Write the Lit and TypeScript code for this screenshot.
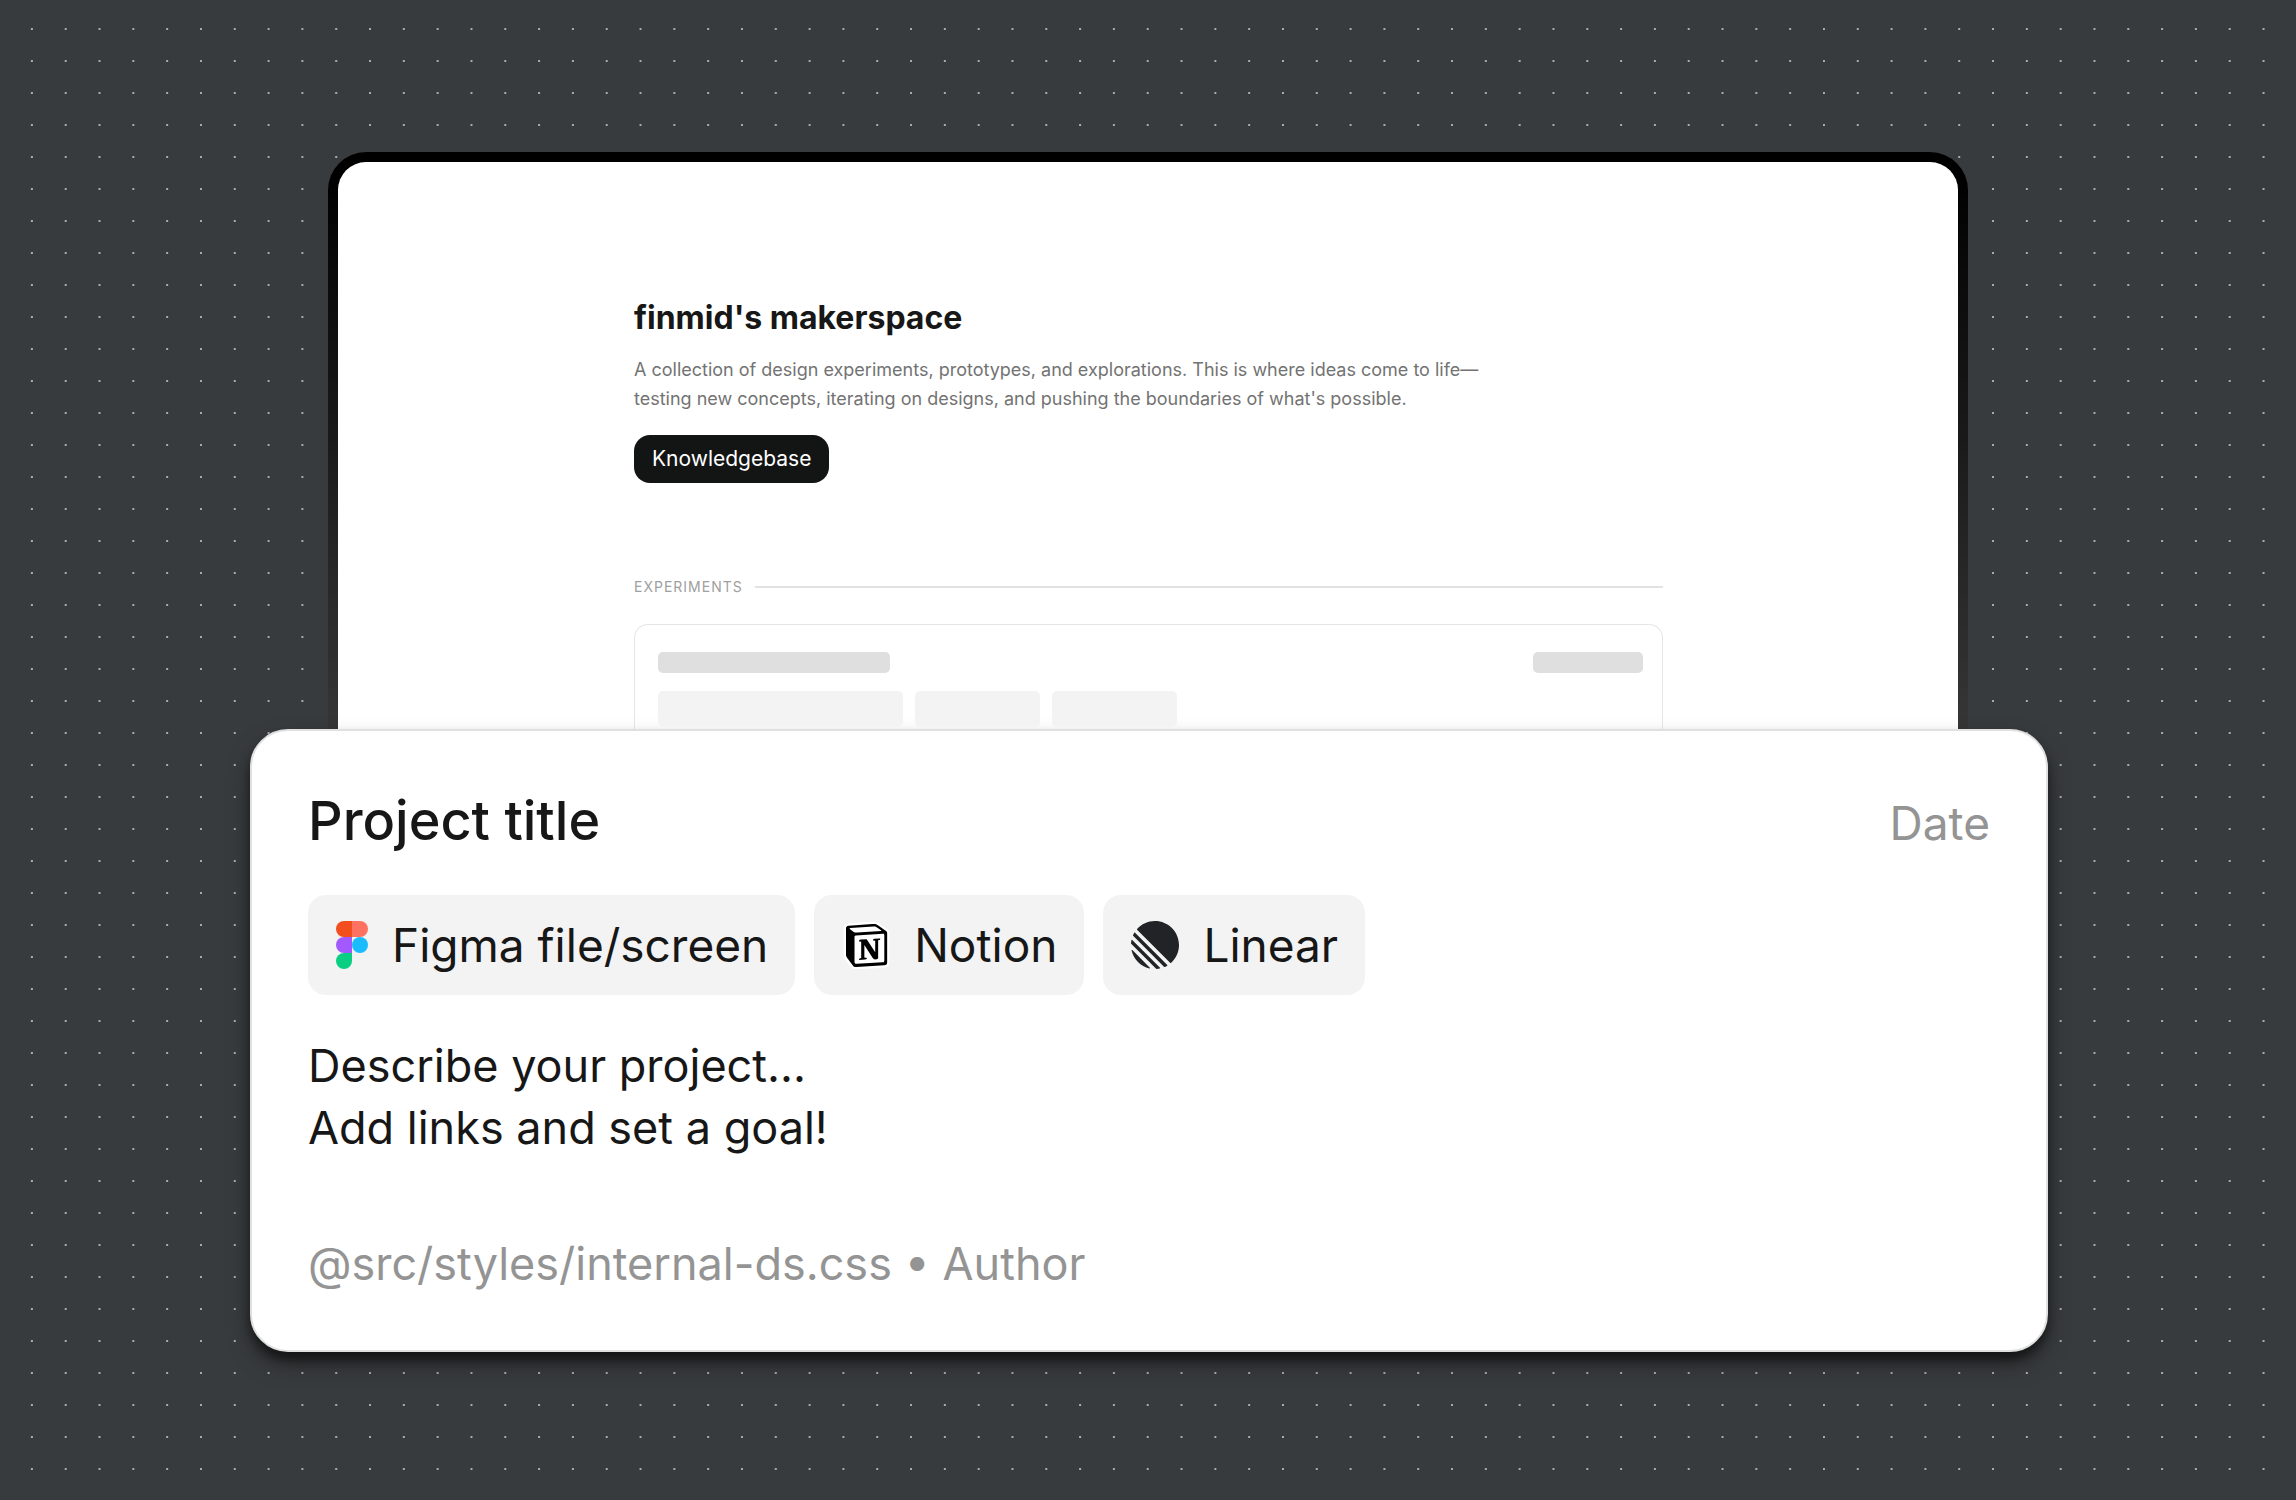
import { LitElement, html, css, svg } from "lit";
import { customElement } from "lit/decorators.js";

const figmaLogo = svg`
  <svg class="logo logo-figma" viewBox="0 0 32 48" aria-hidden="true">
    <path fill="#f24e1e" d="M8 0h8v16H8A8 8 0 0 1 8 0z" />
    <path fill="#ff7262" d="M16 0h8a8 8 0 0 1 0 16h-8z" />
    <path fill="#a259ff" d="M8 16h8v16H8a8 8 0 0 1 0-16z" />
    <circle fill="#1abcfe" cx="24" cy="24" r="8" />
    <path fill="#0acf83" d="M8 32h8v8a8 8 0 1 1-8-8z" />
  </svg>`;

const notionLogo = svg`
  <svg class="logo logo-square" viewBox="0 0 48 48" aria-hidden="true">
    <g transform="translate(4 3) scale(.43)">
      <path fill="#fff" stroke="#fff" stroke-width="11" stroke-linejoin="round" d="M6.017 4.313l55.333-4.087c6.797-.583 8.543-.19 12.817 2.917l17.663 12.443c2.913 2.14 3.883 2.723 3.883 5.053v68.243c0 4.277-1.553 6.807-6.99 7.193L24.467 99.967c-4.08.193-6.023-.39-8.16-3.113L3.3 79.94c-2.333-3.113-3.3-5.443-3.3-8.167V11.113c0-3.497 1.553-6.413 6.017-6.8z" />
      <path fill="#000" fill-rule="evenodd" d="M61.35.227l-55.333 4.087C1.553 4.7 0 7.617 0 11.113v60.66c0 2.723.967 5.053 3.3 8.167l13.007 16.913c2.137 2.723 4.08 3.307 8.16 3.113l64.257-3.89c5.433-.387 6.99-2.917 6.99-7.193V20.64c0-2.21-.873-2.847-3.443-4.733L74.167 3.143C69.893.036 68.147-.357 61.35.227zM25.92 19.523c-5.247.353-6.437.433-9.417-1.99L8.927 11.507c-.77-.78-.383-1.753 1.557-1.947l53.193-3.887c4.467-.39 6.793 1.167 8.54 2.527l9.123 6.61c.39.197 1.36 1.36.193 1.36L26.6 19.477zM19.803 88.3V30.367c0-2.53.777-3.697 3.103-3.893L86 22.78c2.14-.193 3.107 1.167 3.107 3.693v57.547c0 2.53-.39 4.67-3.883 4.863l-60.377 3.5c-3.493.193-5.043-.97-5.043-4.083zm59.6-54.827c.387 1.75 0 3.5-1.75 3.7l-2.91.577v42.773c-2.527 1.36-4.853 2.137-6.797 2.137-3.107 0-3.883-.973-6.21-3.887l-19.03-29.94v28.967l6.02 1.363s0 3.5-4.857 3.5l-13.39.777c-.39-.78 0-2.723 1.357-3.11l3.497-.97v-38.3L30.48 40.667c-.39-1.75.58-4.277 3.3-4.473l14.367-.967 19.8 30.327v-26.83l-5.047-.58c-.39-2.143 1.163-3.7 3.103-3.89z" />
    </g>
  </svg>`;

const linearLogo = svg`
  <svg class="logo logo-square" viewBox="0 0 100 100" aria-hidden="true">
    <path fill="#222326" d="M1.225 61.523c-.222-.949.908-1.546 1.597-.857l36.512 36.512c.689.689.092 1.819-.857 1.597C20.052 94.452 5.548 79.949 1.225 61.523zM.002 46.889c-.018.283.089.56.29.761l52.058 52.058c.201.201.477.308.761.29 2.369-.148 4.694-.46 6.962-.926.765-.157 1.03-1.096.478-1.648L2.576 39.449c-.552-.552-1.491-.286-1.648.478-.466 2.269-.778 4.593-.926 6.962zM4.211 29.705c-.166.374-.082.811.208 1.1l64.776 64.776c.289.289.726.374 1.1.208 1.786-.796 3.517-1.693 5.186-2.684.552-.328.637-1.087.183-1.541L8.436 24.337c-.454-.454-1.213-.369-1.541.183-.991 1.668-1.888 3.399-2.684 5.185zM12.659 18.074c-.37-.37-.393-.964-.044-1.354C21.78 6.459 35.111 0 49.952 0 77.593 0 100 22.407 100 50.048c0 14.841-6.459 28.172-16.72 37.338-.39.349-.984.326-1.354-.044z" />
  </svg>`;

const links = [
  { label: "Figma file/screen", logo: figmaLogo },
  { label: "Notion", logo: notionLogo },
  { label: "Linear", logo: linearLogo },
];

@customElement("makerspace-page")
class MakerspacePage extends LitElement {
  static styles = css`
    :host {
      display: block;
      padding: 10px 10px 0;
      border-radius: 38px 38px 0 0;
      background: linear-gradient(#000 0, #000 20px, #363636 100%);
    }
    .screen {
      padding: 132px 24px 0 25px;
      border-radius: 28px 28px 0 0;
      background: #fff;
    }
    .content {
      max-width: 1029px;
      margin: 0 auto;
    }
    h1 {
      margin: 0;
      font-size: 32px;
      line-height: 48px;
      font-weight: 700;
      color: #171717;
    }
    .intro {
      max-width: 860px;
      margin: 13px 0 22px;
      font-size: 18px;
      line-height: 29px;
      color: #737373;
    }
    .button {
      display: block;
      width: fit-content;
      padding: 0 18px;
      border-radius: 16px;
      font-size: 21px;
      line-height: 48px;
      color: #fff;
      background: #131514;
      text-decoration: none;
    }
    .section {
      display: flex;
      align-items: center;
      gap: 12px;
      margin: 92px 0 25px;
    }
    h2 {
      margin: 0;
      font-size: 14px;
      line-height: 24px;
      font-weight: 400;
      letter-spacing: 1px;
      color: #a0a0a0;
    }
    .rule {
      flex: 1;
      height: 2px;
      background: #e2e2e2;
    }
    .card {
      padding: 27px 19px 2px 23px;
      border: 1px solid #e6e6e6;
      border-bottom: 0;
      border-radius: 14px 14px 0 0;
    }
    .row {
      display: flex;
      justify-content: space-between;
      margin-bottom: 18px;
    }
    .chips {
      display: flex;
      gap: 12px;
    }
    .bar {
      height: 21px;
      border-radius: 5px;
      background: #dfdfdf;
    }
    .chip {
      width: 125px;
      height: 36px;
      border-radius: 5px;
      background: #f3f3f3;
    }
    .bar-title { width: 232px; }
    .bar-date { width: 110px; }
    .chip-wide { width: 245px; }
  `;

  render() {
    return html`
      <div class="screen">
        <div class="content">
          <h1>finmid's makerspace</h1>
          <p class="intro">
            A collection of design experiments, prototypes, and explorations.
            This is where ideas come to life—<br />testing new concepts,
            iterating on designs, and pushing the boundaries of what's possible.
          </p>
          <a class="button" href="#knowledgebase">Knowledgebase</a>
          <div class="section">
            <h2>EXPERIMENTS</h2>
            <div class="rule"></div>
          </div>
          <div class="card">
            <div class="row">
              <div class="bar bar-title"></div>
              <div class="bar bar-date"></div>
            </div>
            <div class="chips">
              <div class="chip chip-wide"></div>
              <div class="chip"></div>
              <div class="chip"></div>
            </div>
          </div>
        </div>
      </div>
    `;
  }
}

@customElement("project-card")
class ProjectCard extends LitElement {
  static styles = css`
    :host {
      display: block;
      padding: 58px 56px 55px;
      border: 2px solid #e0e0e0;
      border-radius: 38px;
      background: #fff;
      box-shadow: 0 12px 24px -4px rgba(0, 0, 0, 0.5), 0 8px 10px rgba(0, 0, 0, 0.4);
      font-size: 45px;
      line-height: 62px;
      color: #171717;
    }
    header {
      display: flex;
      align-items: baseline;
      justify-content: space-between;
    }
    h2 {
      margin: 0;
      font-size: 54px;
      line-height: 64px;
      font-weight: 500;
    }
    .muted {
      color: #949494;
    }
    .date,
    .link {
      font-size: 46px;
    }
    .links {
      display: flex;
      flex-wrap: wrap;
      gap: 19px;
      margin: 41px 0 40px;
    }
    .link {
      display: flex;
      align-items: center;
      gap: 24px;
      height: 100px;
      padding: 0 27px 0 28px;
      border-radius: 18px;
      background: #f3f3f3;
      color: inherit;
      text-decoration: none;
    }
    .logo {
      height: 48px;
    }
    .logo-figma { width: 32px; }
    .logo-square { width: 48px; }
    p {
      margin: 0;
    }
    footer {
      margin-top: 74px;
    }
  `;

  render() {
    return html`
      <header>
        <h2>Project title</h2>
        <span class="date muted">Date</span>
      </header>
      <nav class="links">
        ${links.map(
          ({ label, logo }) => html`<a class="link" href="#">${logo}<span>${label}</span></a>`
        )}
      </nav>
      <p>Describe your project...<br />Add links and set a goal!</p>
      <footer class="muted">@src/styles/internal-ds.css • Author</footer>
    `;
  }
}

@customElement("app-root")
class AppRoot extends LitElement {
  static styles = css`
    :host {
      display: block;
      box-sizing: border-box;
      min-height: 100vh;
      padding: 13px 15px 15px;
      background: radial-gradient(circle, #a9acad 1px, transparent 1px) content-box #383b3d;
      background-size: 34px 32px;
      background-repeat: round;
      background-clip: border-box;
      font-family: Inter, sans-serif;
      font-weight: 400;
    }
    .stage {
      padding: 139px 233px 0 235px;
    }
    makerspace-page {
      margin: 0 80px 0 78px;
    }
  `;

  render() {
    return html`
      <main class="stage">
        <makerspace-page></makerspace-page>
        <project-card></project-card>
      </main>
    `;
  }
}
